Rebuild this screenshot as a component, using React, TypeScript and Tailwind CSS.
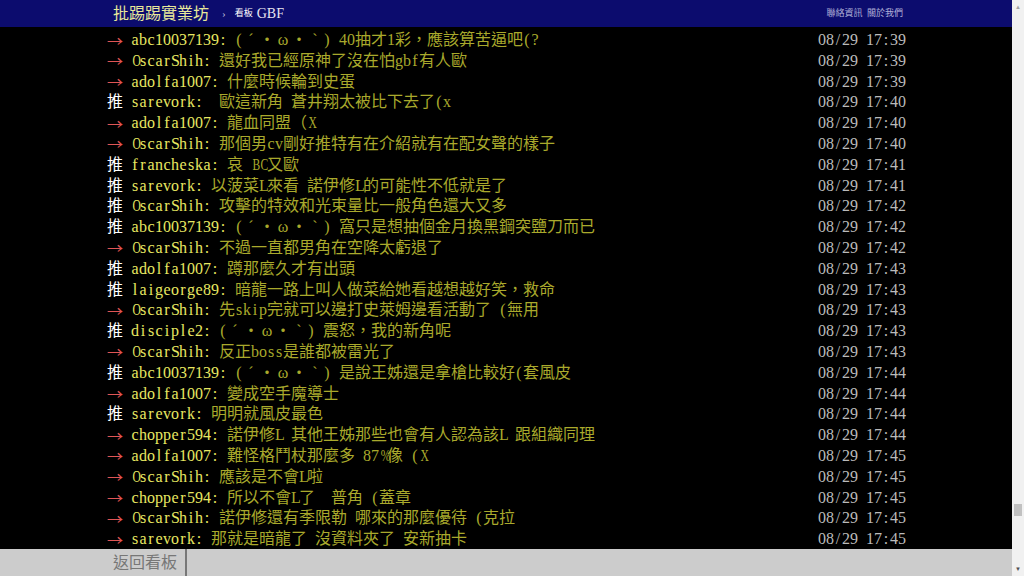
import React from 'react';

type Push = {
  tag: '推' | '→';
  user: string;
  content: string;
  time: string;
};

const pushes: Push[] = [
  { tag: '→', user: 'abc10037139', content: '(ˊ・ω・ˋ) 40抽才1彩，應該算苦逼吧(?', time: '08/29 17:39' },
  { tag: '→', user: 'OscarShih', content: '還好我已經原神了沒在怕gbf有人歐', time: '08/29 17:39' },
  { tag: '→', user: 'adolfa1007', content: '什麼時候輪到史蛋', time: '08/29 17:39' },
  { tag: '推', user: 'sarevork', content: ' 歐這新角 蒼井翔太被比下去了(x', time: '08/29 17:40' },
  { tag: '→', user: 'adolfa1007', content: '龍血同盟（X', time: '08/29 17:40' },
  { tag: '→', user: 'OscarShih', content: '那個男cv剛好推特有在介紹就有在配女聲的樣子', time: '08/29 17:40' },
  { tag: '推', user: 'francheska', content: '哀 BC又歐', time: '08/29 17:41' },
  { tag: '推', user: 'sarevork', content: '以菠菜L來看 諾伊修L的可能性不低就是了', time: '08/29 17:41' },
  { tag: '推', user: 'OscarShih', content: '攻擊的特效和光束量比一般角色還大又多', time: '08/29 17:42' },
  { tag: '推', user: 'abc10037139', content: '(ˊ・ω・ˋ) 窩只是想抽個金月換黑鋼突鹽刀而已', time: '08/29 17:42' },
  { tag: '→', user: 'OscarShih', content: '不過一直都男角在空降太虧退了', time: '08/29 17:42' },
  { tag: '推', user: 'adolfa1007', content: '蹲那麼久才有出頭', time: '08/29 17:43' },
  { tag: '推', user: 'laigeorge89', content: '暗龍一路上叫人做菜給她看越想越好笑，救命', time: '08/29 17:43' },
  { tag: '→', user: 'OscarShih', content: '先skip完就可以邊打史萊姆邊看活動了 (無用', time: '08/29 17:43' },
  { tag: '推', user: 'disciple2', content: '(ˊ・ω・ˋ) 震怒，我的新角呢', time: '08/29 17:43' },
  { tag: '→', user: 'OscarShih', content: '反正boss是誰都被雷光了', time: '08/29 17:43' },
  { tag: '推', user: 'abc10037139', content: '(ˊ・ω・ˋ) 是說王姊還是拿槍比較好(套風皮', time: '08/29 17:44' },
  { tag: '→', user: 'adolfa1007', content: '變成空手魔導士', time: '08/29 17:44' },
  { tag: '推', user: 'sarevork', content: '明明就風皮最色', time: '08/29 17:44' },
  { tag: '→', user: 'chopper594', content: '諾伊修L 其他王姊那些也會有人認為該L 跟組織同理', time: '08/29 17:44' },
  { tag: '→', user: 'adolfa1007', content: '難怪格鬥杖那麼多 87%像 (X', time: '08/29 17:45' },
  { tag: '→', user: 'OscarShih', content: '應該是不會L啦', time: '08/29 17:45' },
  { tag: '→', user: 'chopper594', content: '所以不會L了  普角 (蓋章', time: '08/29 17:45' },
  { tag: '→', user: 'OscarShih', content: '諾伊修還有季限勒 哪來的那麼優待 (克拉', time: '08/29 17:45' },
  { tag: '→', user: 'sarevork', content: '那就是暗龍了 沒資料夾了 安新抽卡', time: '08/29 17:45' },
];

// glyphs that are too wide for an 8px cell get squeezed, like the terminal font does
const WIDE = 'ABCDGHKMNOQRUVWXYmw%&@';

// terminal-style grid: half-width chars take 8px, full-width take 16px
function Cells({ text }: { text: string }) {
  return (
    <>
      {Array.from(text).map((ch, i) => {
        if (ch.charCodeAt(0) >= 128) {
          return (
            <span key={i} className="inline-block w-4 text-center">
              {ch}
            </span>
          );
        }
        return (
          <span key={i} className="inline-block w-2 text-center">
            {ch === ' ' ? (
              '\u00a0'
            ) : WIDE.includes(ch) ? (
              <span className="inline-block scale-x-[0.72]">{ch}</span>
            ) : (
              ch
            )}
          </span>
        );
      })}
    </>
  );
}

function PushRow({ p }: { p: Push }) {
  return (
    <div className="flex h-[20.8px] items-center whitespace-pre text-[16px] leading-[20.8px]">
      {p.tag === '推' ? (
        <span className="w-6 text-white">推</span>
      ) : (
        <span className="w-6">
          <span className="inline-block origin-left scale-x-[1.15] font-['Noto_Sans_CJK_TC',sans-serif] text-[14px] leading-[20px] text-[#e05555]">
            →
          </span>
        </span>
      )}
      <span className="text-[#e8e862]">
        <Cells text={p.user + ': '} />
      </span>
      <span className="text-[#a9a92c]">
        <Cells text={p.content} />
      </span>
      <span className="ml-auto text-[#bbbbbb]">
        <Cells text={p.time} />
      </span>
    </div>
  );
}

function Scrollbar() {
  return (
    <div className="flex w-3 flex-col items-center bg-[#f1f1f1]">
      <div className="mt-[4px] text-[6px] leading-none text-[#a3a3a3]">▲</div>
      <div className="flex-1" />
      <div className="mb-[50px] h-[12px] w-[8px] bg-[#c1c1c1]" />
      <div className="mb-[4px] text-[6px] leading-none text-[#505050]">▼</div>
    </div>
  );
}

export default function App() {
  return (
    <div className="flex h-[576px] w-[1024px] overflow-hidden bg-black font-['Liberation_Serif','Noto_Sans_CJK_TC',serif]">
      <div className="flex flex-1 flex-col">
        {/* Top bar */}
        <div className="h-[27px] bg-[#0c0c6e]">
          <div className="mx-auto flex h-full w-[800px] items-center pl-[7px]">
            <span className="text-[16px] text-[#e8e89a]">批踢踢實業坊</span>
            <span className="ml-[13px] text-[11px] text-[#b8b8d8]">›</span>
            <span className="ml-[9px] text-[9px] text-white">看板</span>
            <span className="ml-[4px] text-[14px] text-[#e6e6f0]">GBF</span>
            <span className="ml-auto mr-[3px] text-[9px] text-[#b0b0d8]">聯絡資訊&nbsp;&nbsp;關於我們</span>
          </div>
        </div>

        {/* Pushes */}
        <div className="flex-1 overflow-hidden pt-[3px]">
          <div className="mx-auto w-[800px] pl-[1px]">
            {pushes.map((p, i) => (
              <PushRow key={i} p={p} />
            ))}
          </div>
        </div>

        {/* Bottom nav */}
        <div className="h-[27px] bg-[#cccccc]">
          <div className="mx-auto flex h-full w-[800px]">
            <span className="flex items-center border-r-2 border-[#777777] pl-[7px] pr-[8px] text-[16px] text-[#777777]">
              返回看板
            </span>
          </div>
        </div>
      </div>
      <Scrollbar />
    </div>
  );
}
